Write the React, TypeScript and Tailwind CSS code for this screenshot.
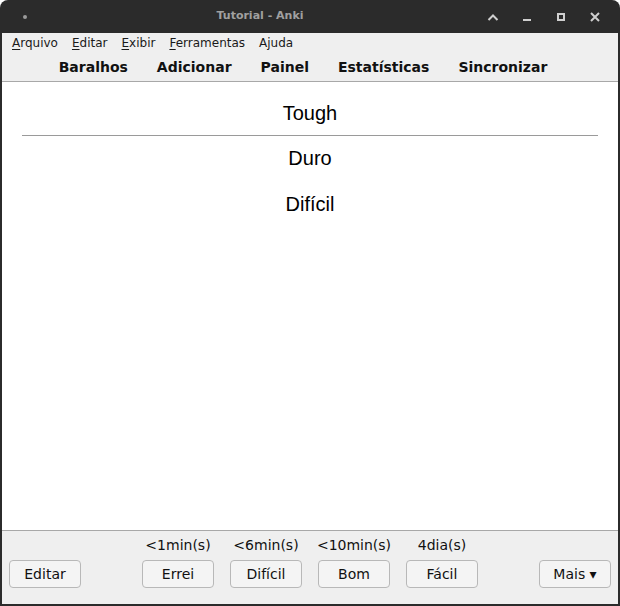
const ui = { fontFamily: '"DejaVu Sans", sans-serif' };
const card = { fontFamily: '"Liberation Sans", Arial, sans-serif' };

function Btn({ children }: { children: React.ReactNode }) {
  return (
    <button className="h-[28px] w-[72px] rounded-[4px] border border-[#b8b8b8] bg-[#f4f4f4] text-[14px] text-[#111]">
      {children}
    </button>
  );
}

const ANSWERS = [
  { label: 'Errei', time: '<1min(s)' },
  { label: 'Difícil', time: '<6min(s)' },
  { label: 'Bom', time: '<10min(s)' },
  { label: 'Fácil', time: '4dia(s)' },
];

const MENU = [
  { name: 'Arquivo', u: true },
  { name: 'Editar', u: true },
  { name: 'Exibir', u: true },
  { name: 'Ferramentas', u: true },
  { name: 'Ajuda', u: false },
];

export default function App() {
  return (
    <div className="flex h-[606px] w-[620px] flex-col bg-white" style={ui}>
      <div className="flex h-[606px] flex-col overflow-hidden rounded-t-[8px] bg-[#2b2b2b] px-[2px] pb-[2px]">
        {/* title bar */}
        <div className="relative flex h-[33px] shrink-0 items-center">
          <span className="ml-[21px] h-[4px] w-[4px] rounded-full bg-[#9a9a9a]" />
          <span className="absolute left-[160px] w-[196px] text-center text-[11px] font-bold text-[#a0a0a0]">
            Tutorial - Anki
          </span>
          <div className="ml-auto mr-[15px] flex items-center gap-[18px] text-[#cfcfcf]">
            <svg width="16" height="16" viewBox="0 0 16 16" fill="none" stroke="currentColor" strokeWidth="2">
              <path d="M3.5 11 L8 6.5 L12.5 11" />
            </svg>
            <svg width="16" height="16" viewBox="0 0 16 16" fill="currentColor">
              <rect x="4" y="10" width="8" height="2" />
            </svg>
            <svg width="16" height="16" viewBox="0 0 16 16" fill="none" stroke="currentColor" strokeWidth="2">
              <rect x="5" y="5" width="6" height="6" />
            </svg>
            <svg width="16" height="16" viewBox="0 0 16 16" fill="none" stroke="currentColor" strokeWidth="2">
              <path d="M4 4 L12 12 M12 4 L4 12" />
            </svg>
          </div>
        </div>

        <div className="flex flex-1 flex-col bg-[#efefef]">
          {/* menu bar */}
          <div className="flex h-[19px] items-center gap-[14px] pl-[10px] text-[12px] text-[#1a1a1a]">
            {MENU.map((m) => (
              <span key={m.name}>
                <span className={m.u ? 'underline underline-offset-2' : ''}>{m.name[0]}</span>
                {m.name.slice(1)}
              </span>
            ))}
          </div>

          {/* toolbar */}
          <div className="flex h-[30px] items-center justify-center gap-[29px] border-b border-[#a8a8a8] pr-[14px] pt-[2px] text-[14px] font-bold text-[#111]">
            <span>Baralhos</span>
            <span>Adicionar</span>
            <span>Painel</span>
            <span>Estatísticas</span>
            <span>Sincronizar</span>
          </div>

          {/* card */}
          <div className="flex flex-1 flex-col items-center bg-white pt-[20px] text-[20px] text-black" style={card}>
            <div className="leading-[23px]">Tough</div>
            <hr className="mt-[10px] w-[576px] border-t border-[#9a9a9a]" />
            <div className="mt-[11px] leading-[23px]">Duro</div>
            <div className="mt-[23px] leading-[23px]">Difícil</div>
          </div>

          {/* bottom bar */}
          <div className="flex h-[74px] items-end border-t border-[#a8a8a8] px-[7px] pb-[16px]">
            <Btn>Editar</Btn>
            <div className="ml-[61px] flex gap-[16px]">
              {ANSWERS.map((a) => (
                <div key={a.label} className="flex w-[72px] flex-col items-center">
                  <span className="mb-[7px] whitespace-nowrap text-[14px] leading-[16px] text-[#111]">{a.time}</span>
                  <Btn>{a.label}</Btn>
                </div>
              ))}
            </div>
            <div className="ml-auto">
              <Btn>Mais ▾</Btn>
            </div>
          </div>
        </div>
      </div>
    </div>
  );
}
